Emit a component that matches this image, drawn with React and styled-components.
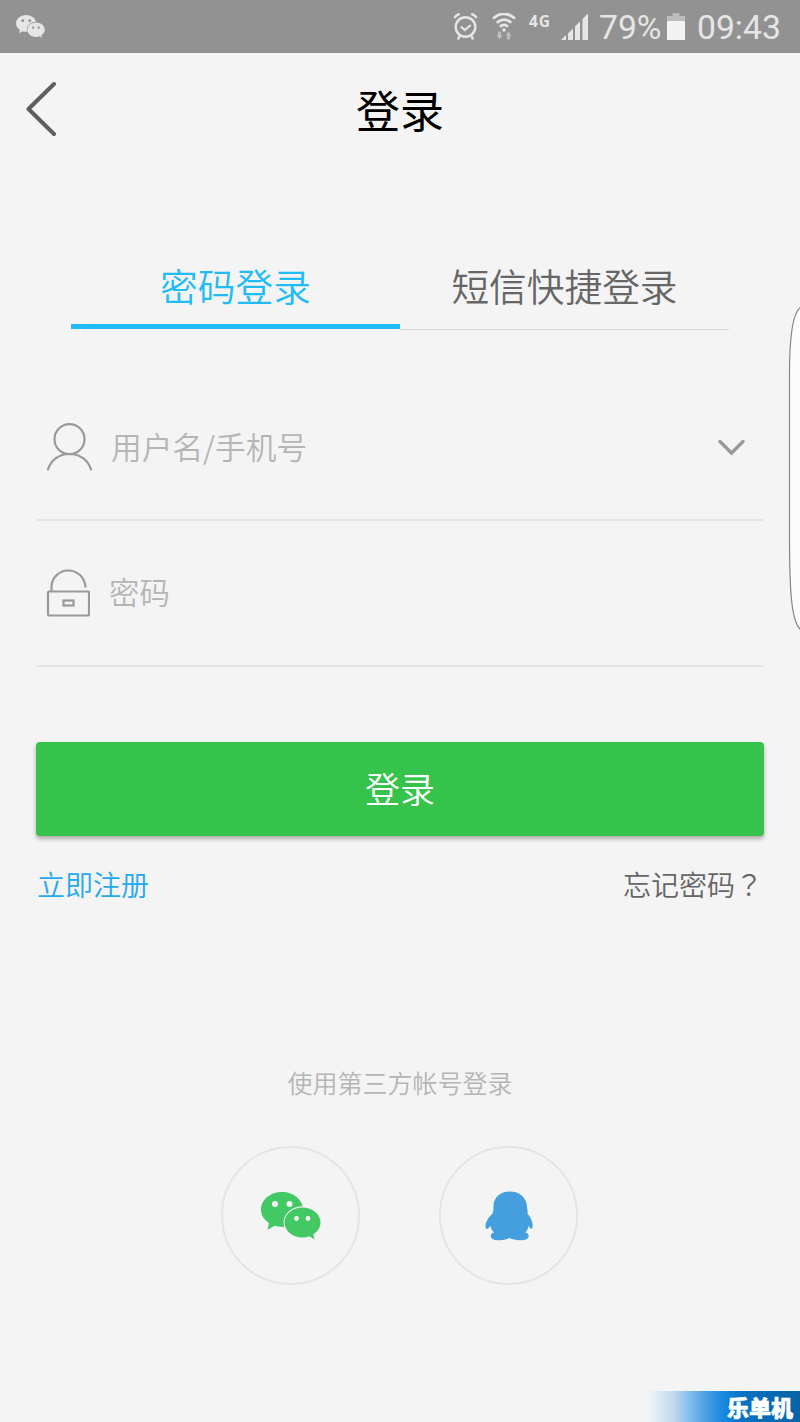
import React from 'react';
import styled, { createGlobalStyle } from 'styled-components'

const GlobalStyle = createGlobalStyle`
  body {
    margin: 0;
    background: #f4f4f4;
    font-family: "Noto Sans CJK SC", sans-serif;
  }
  * {
    box-sizing: border-box;
  }
  svg {
    display: block;
    flex-shrink: 0;
  }
`

const AppContainer = styled.div`
  position: relative;
  width: 800px;
  height: 1422px;
  overflow: hidden;
  background: #f4f4f4;
  display: flex;
  flex-direction: column;
`

const StatusBar = styled.div`
  height: 53px;
  padding: 0 20px 0 16px;
  display: flex;
  align-items: center;
  justify-content: space-between;
  background: #929292;
  color: #e6e6e6;
`
const StatusItems = styled.div`
  display: flex;
  align-items: center;
`
const StatusGap = styled.span`
  width: ${props => props.$width}px;
`
const StatusText = styled.span`
  font-family: Roboto, sans-serif;
  font-size: 33.7px;
  line-height: 40px;
  padding-top: 2px;
  width: ${props => props.$width}px;
  white-space: nowrap;
`
const NetworkType = styled.span`
  width: 23px;
  margin-bottom: 12px;
  font-family: "Open Sans", sans-serif;
  font-size: 15.5px;
  line-height: 18px;
  font-weight: 700;
  letter-spacing: 0.8px;
`

const Header = styled.header`
  height: 115px;
  padding: 0 26px 3px;
  display: grid;
  grid-template-columns: 60px 1fr 60px;
  align-items: center;
`
const BackButton = styled.button`
  border: 0;
  padding: 0;
  height: 57px;
  background: none;
`
const Title = styled.h1`
  margin: 0;
  text-align: center;
  font-size: 44px;
  font-weight: 400;
  line-height: 60px;
  color: #000;
`

const Tabs = styled.div`
  display: flex;
  height: 89px;
  margin: 73px 71px 0;
`
const Tab = styled.button`
  flex: 1;
  border: 0;
  border-bottom: ${props => props.$active ? '5px solid #20bbf8' : '1px solid #d9d9d9'};
  margin-bottom: ${props => props.$active ? '1px' : '0'};
  padding: 17px 0 0;
  display: flex;
  justify-content: center;
  background: none;
  font-family: inherit;
  font-size: 37.7px;
  font-weight: 350;
  line-height: 54px;
  color: ${props => props.$active ? '#1fbcf6' : '#666'};
`

const Form = styled.form`
  margin: 0 36px;
  padding-top: 45px;
`
const Field = styled.label`
  display: flex;
  align-items: center;
  height: 146px;
  padding: 0 18px 0 10px;
  border-bottom: 2px solid #e5e5e5;
`
const FieldInput = styled.input`
  flex: 1;
  min-width: 0;
  height: 60px;
  margin-left: 19px;
  padding: 0 0 4px;
  border: 0;
  outline: 0;
  background: none;
  font-family: inherit;
  font-size: ${props => props.$size}px;
  font-weight: 350;
  color: #666;
  &::placeholder {
    color: #b5b5b5;
    opacity: 1;
  }
`
const SubmitButton = styled.button`
  width: 100%;
  height: 94px;
  margin-top: 74.5px;
  padding: 0 0 2px;
  border: 0;
  border-radius: 4px;
  background: #36c34c;
  box-shadow: 0 3px 4px rgba(0, 0, 0, 0.3);
  font-family: inherit;
  font-size: 35px;
  font-weight: 350;
  color: #fff;
`

const Links = styled.div`
  display: flex;
  justify-content: space-between;
  margin: 28.5px 37px 0;
`
const Link = styled.a`
  font-size: 28px;
  font-weight: 350;
  line-height: 40px;
  color: ${props => props.$color};
`
const QuestionMark = styled.span`
  font-family: "Noto Sans CJK TC", sans-serif;
`

const ThirdParty = styled.section`
  display: flex;
  flex-direction: column;
  align-items: center;
  margin-top: 159px;
`
const ThirdPartyLabel = styled.p`
  margin: 0;
  font-size: 25px;
  font-weight: 350;
  line-height: 38px;
  color: #b5b5b5;
`
const SocialRow = styled.div`
  display: flex;
  gap: 79px;
  margin: 45px 1px 0 0;
`
const SocialButton = styled.button`
  width: 139px;
  height: 139px;
  padding: 1px 0 0 1px;
  border: 2px solid #e5e5e5;
  border-radius: 50%;
  background: none;
  display: flex;
  align-items: center;
  justify-content: center;
`

const EdgeHandle = styled.div`
  position: absolute;
  right: 0;
  top: 304px;
`
const Watermark = styled.div`
  position: absolute;
  right: 0;
  bottom: 0;
  width: 152px;
  height: 31px;
  padding-right: 7px;
  text-align: right;
  background: linear-gradient(to right, #f4f4f4 0%, #c0d9ee 17%, #80bbea 28%, #4a9fe2 38%, #1787e0 50%, #0a72c2 62%, #0763a6 100%);
  font-size: 22px;
  line-height: 30px;
  font-weight: 900;
  color: #fff;
  -webkit-text-stroke: 0.6px #fff;
`

const WechatIcon = ({ width, height, color, hole }) => (
  <svg width={width} height={height} viewBox="0 0 60 48">
    <path fill={color} d="M21 0C9.400 0 0 7.800 0 17.500c0 5.600 3.100 10.300 8 13.500L6.500 37.800l7.300-4c2.300.7 4.700 1.100 7.200 1.100 11.600 0 21-7.800 21-17.400S32.600 0 21 0z" />
    <ellipse cx="41.500" cy="30.500" rx="19" ry="16.300" fill={hole} />
    <path fill={color} d="M41.500 15.500c-10 0-18 6.700-18 15s8 15 18 15c2.500 0 4.800-.4 7-1.200l5 3.200-1.300-5.200c4.500-2.700 7.300-7 7.300-11.800 0-8.300-8-15-18-15z" />
    <circle cx="14" cy="12" r="3" fill={hole} />
    <circle cx="28.500" cy="12" r="3" fill={hole} />
    <circle cx="35.500" cy="26.500" r="2.400" fill={hole} />
    <circle cx="47" cy="26.500" r="2.400" fill={hole} />
  </svg>
)

const QQIcon = () => (
  <svg width="48" height="50" viewBox="0 0 48 50">
    <path fill="#459fdf" d="M25 .5C15 .5 9 6.500 8.500 14.500c0 3 0 5.500-1 8C3.500 26 .5 31.500.5 35c0 2.800 1 3.500 2.500 2.500L5.500 35c.3 2.500 1.500 4.500 3.500 6.500-2.500.5-3.300 2-3.200 3.700.2 2.800 3.700 4.100 8.700 4 4.500-.2 7.500-.9 10.200-2.200 2.500 1.400 6 2.200 10.300 2.200 5 .1 8.700-1.200 8.700-4.200 0-2-1.200-3-3.200-3.500 1.500-2 2.700-4 3.100-6.500l1.900 2.500c1.500 1 2.200-.5 2.200-3-.2-4.500-2.200-8.500-5.200-12 .3-2-.2-3.500-.5-6.500C41.500 6.500 34.500.5 25 .5z" />
  </svg>
)

const AlarmIcon = () => (
  <svg width="26" height="28" viewBox="0 0 26 28" fill="none" stroke="#e6e6e6">
    <circle cx="12.500" cy="14" r="9.800" strokeWidth="2.400" />
    <path d="M7.800 13.500l4 3.500 6-5" strokeWidth="2.200" />
    <path d="M1.300 5Q3 2 6.700 .8M23.700 5Q22 2 18.300 .8M6.500 23L5 26.500M18.500 23L20 26.500" strokeWidth="2.400" />
  </svg>
)

const WifiIcon = () => (
  <svg width="24" height="28" viewBox="0 0 24 28" fill="none" stroke="#e6e6e6">
    <path d="M1 5.500Q12-4 23 5.500" strokeWidth="2.800" />
    <path d="M4.700 9.800Q12 3.300 19.300 9.800M8 13.800Q12 10 16 13.800" strokeWidth="2.600" />
    <circle cx="12" cy="17" r="1.800" fill="#e6e6e6" stroke="none" />
    <path fill="#bcbcbc" stroke="none" d="M6 18.500h3v4h1.500L7.500 26.500 4.500 22.500H6zM15 26.500h3v-4h1.500L16.500 18.500l-3 4H15z" />
  </svg>
)

const SignalIcon = () => (
  <svg width="28" height="28" viewBox="0 0 28 28" fill="#e6e6e6">
    <path d="M0 27l5-5v5zM7 20.500l5-5V27H7zM14 13.500l5-5V27h-5zM21.500 6L27 .5V27h-5.500z" />
  </svg>
)

const BatteryIcon = () => (
  <svg width="18" height="27" viewBox="0 0 18 27">
    <path fill="#bcbcbc" d="M5.500 0h7v3H18v6H0V3h5.500z" />
    <path fill="#f2f2f2" d="M0 8h18v19H0z" />
  </svg>
)

const UserIcon = () => (
  <svg width="46" height="48" viewBox="0 0 46 48" fill="none" stroke="#999" strokeWidth="2.200" strokeLinecap="round">
    <circle cx="23.500" cy="16.200" r="15" />
    <path d="M2 46.500C5 37 13 31 23.500 31S42 37 45 46.500" />
  </svg>
)

const LockIcon = () => (
  <svg width="44" height="48" viewBox="0 0 44 48" fill="none" stroke="#999" strokeWidth="2.200">
    <rect x="2" y="22.500" width="41" height="24" rx="1" />
    <path d="M5.500 22v-4C5.500 9 13 1.500 22 1.500S39 8 39.500 18.500" />
    <rect x="17.500" y="31.500" width="10" height="5" />
  </svg>
)

class App extends React.Component {
  state = {
    activeTab: 0,
    username: '',
    password: ''
  }

  tabs = ['密码登录', '短信快捷登录']

  onChangeUsername = (event) => {
    this.setState({username: event.target.value})
  }

  onChangePassword = (event) => {
    this.setState({password: event.target.value})
  }

  render() {
    return (
      <AppContainer>
        <GlobalStyle />
        <StatusBar>
          <WechatIcon width={29} height={25} color="#e6e6e6" hole="#929292" />
          <StatusItems>
            <AlarmIcon />
            <StatusGap $width={13} />
            <WifiIcon />
            <StatusGap $width={13} />
            <NetworkType>4G</NetworkType>
            <StatusGap $width={9} />
            <SignalIcon />
            <StatusGap $width={10} />
            <StatusText $width={61}>79%</StatusText>
            <StatusGap $width={7} />
            <BatteryIcon />
            <StatusGap $width={12} />
            <StatusText $width={83}>09:43</StatusText>
          </StatusItems>
        </StatusBar>

        <Header>
          <BackButton>
            <svg width="32" height="57" viewBox="0 0 32 57" fill="none" stroke="#5e5e5e" strokeWidth="4" strokeLinecap="round" strokeLinejoin="round">
              <path d="M28 3L2.500 28 28 53" />
            </svg>
          </BackButton>
          <Title>登录</Title>
        </Header>

        <Tabs>
          {this.tabs.map((tab, index) => {
            return <Tab
              key={tab}
              $active={index === this.state.activeTab}
              onClick={() => this.setState({activeTab: index})}
            >
              {tab}
            </Tab>
          })}
        </Tabs>

        <Form onSubmit={(event) => event.preventDefault()}>
          <Field>
            <UserIcon />
            <FieldInput
              $size={30.7}
              onChange={this.onChangeUsername}
              value={this.state.username}
              placeholder={'用户名/手机号'}
            />
            <svg width="28" height="17" viewBox="0 0 28 17" fill="none" stroke="#999" strokeWidth="3.400" strokeLinecap="round">
              <path d="M2 2.500L13.500 14 25 2.500" />
            </svg>
          </Field>
          <Field>
            <LockIcon />
            <FieldInput
              $size={30.4}
              type="password"
              onChange={this.onChangePassword}
              value={this.state.password}
              placeholder={'密码'}
            />
          </Field>
          <SubmitButton>登录</SubmitButton>
        </Form>

        <Links>
          <Link $color="#22a9ee">立即注册</Link>
          <Link $color="#666">忘记密码<QuestionMark lang="zh-TW">？</QuestionMark></Link>
        </Links>

        <ThirdParty>
          <ThirdPartyLabel>使用第三方帐号登录</ThirdPartyLabel>
          <SocialRow>
            <SocialButton>
              <WechatIcon width={60} height={48} color="#42c964" hole="#f4f4f4" />
            </SocialButton>
            <SocialButton>
              <QQIcon />
            </SocialButton>
          </SocialRow>
        </ThirdParty>

        <EdgeHandle>
          <svg width="12" height="328" viewBox="0 0 12 328">
            <path fill="#fcfcfc" stroke="#858585" strokeWidth="1.200" d="M13 3C4 8 1.500 35 1.500 70V230C1.500 285 3 318 13 326" />
          </svg>
        </EdgeHandle>
        <Watermark>乐单机</Watermark>
      </AppContainer>
    );
  }
}

export default App;
